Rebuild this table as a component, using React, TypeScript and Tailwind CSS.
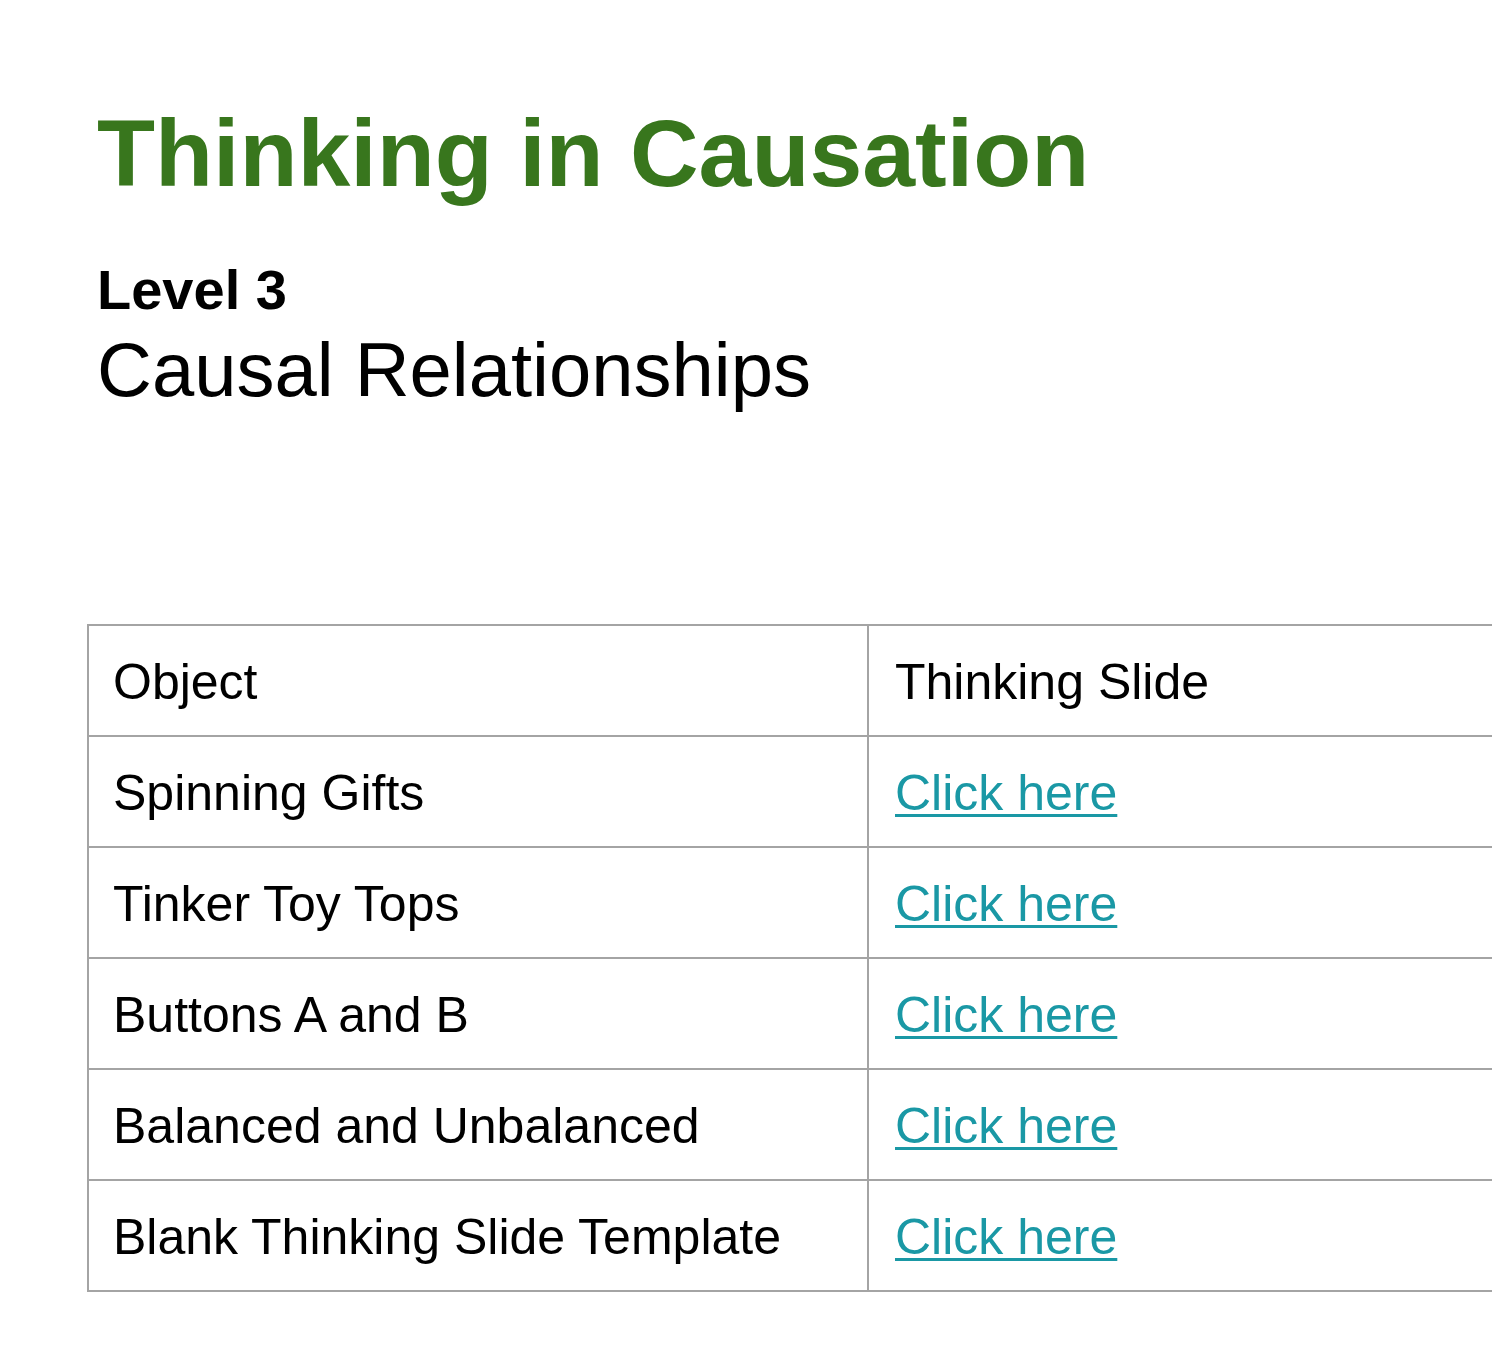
const ROWS = [
  'Spinning Gifts',
  'Tinker Toy Tops',
  'Buttons A and B',
  'Balanced and Unbalanced',
  'Blank Thinking Slide Template',
] as const

export default function App() {
  return (
    <div className="min-h-[1352px] w-full overflow-hidden bg-white font-['Liberation_Sans',Arial,sans-serif] text-black">
      <header className="pl-[97px] pt-[106px]">
        <h1 className="text-[95px] leading-none font-bold text-[#38761d]">Thinking in Causation</h1>
        <p className="mt-[61px] text-[56px] leading-none font-bold">Level 3</p>
        <p className="mt-[14px] text-[76px] leading-none">Causal Relationships</p>
      </header>

      <div className="mt-[216px] pl-[87px]">
        <div className="w-[1600px] border-b-2 border-l-2 border-[#a4a4a4] text-[50px]">
          <div className="flex h-[111px] border-t-2 border-[#a4a4a4]">
            <div className="flex w-[780px] items-center border-r-2 border-[#a4a4a4] pt-[3px] pl-[24px]">Object</div>
            <div className="flex flex-1 items-center pt-[3px] pl-[26px]">Thinking Slide</div>
          </div>
          {ROWS.map((label) => (
            <div key={label} className="flex h-[111px] border-t-2 border-[#a4a4a4]">
              <div className="flex w-[780px] items-center border-r-2 border-[#a4a4a4] pt-[3px] pl-[24px]">{label}</div>
              <div className="flex flex-1 items-center pt-[3px] pl-[26px]">
                <a
                  href="#"
                  className="text-[#1a98a5] underline decoration-[3px] underline-offset-[4px]"
                >
                  Click here
                </a>
              </div>
            </div>
          ))}
        </div>
      </div>
    </div>
  )
}
